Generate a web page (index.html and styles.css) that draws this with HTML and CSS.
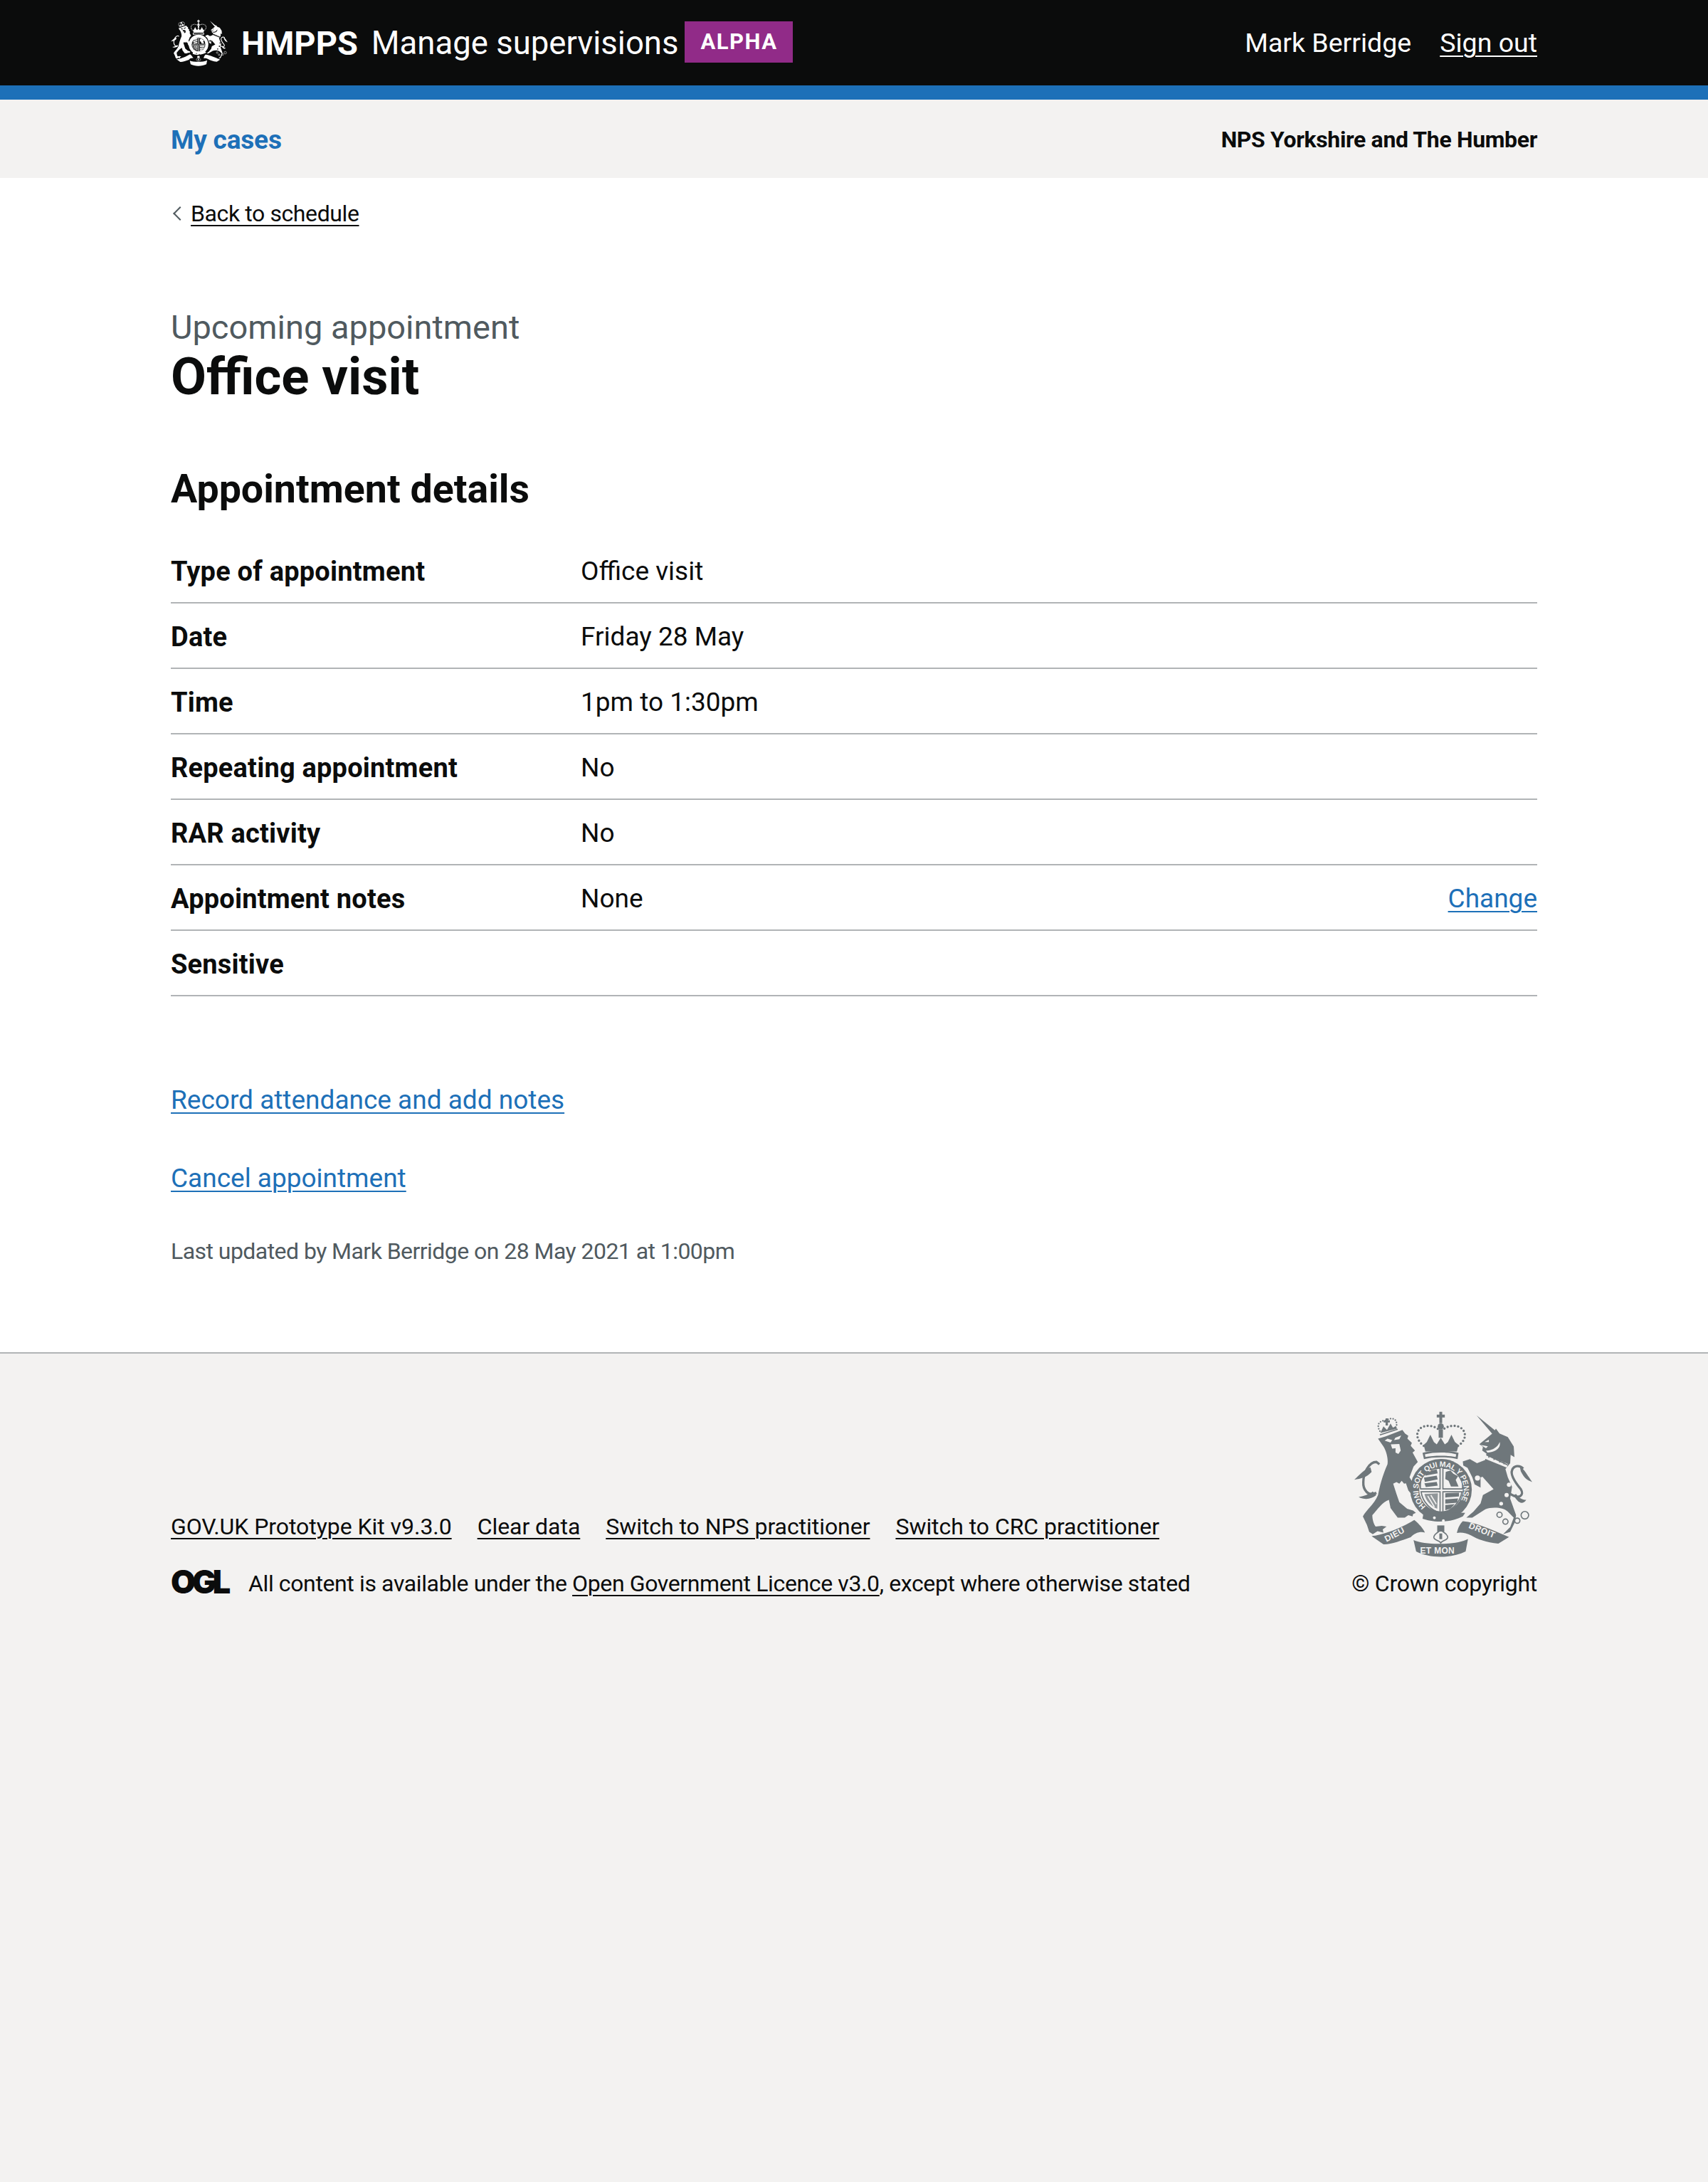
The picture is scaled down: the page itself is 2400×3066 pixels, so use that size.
FILE: index.html
```html
<!DOCTYPE html>
<html lang="en">
<head>
    <meta charset="UTF-8">
    <meta name="viewport" content="width=device-width, initial-scale=1.0">
    <title>Office visit - Manage supervisions</title>
    <link rel="stylesheet" href="styles.css">
</head>
<body>

    <!-- shared crest drawing, used by header and footer -->
    <svg class="defs" width="0" height="0" aria-hidden="true">
        <defs>
            <g id="crest-art">
                <!-- lion -->
                <path d="M172 182 205 172 275 145 286 160 300 170 296 182 315 200 310 212 328 232 318 240 340 280 322 300 305 345 330 385 345 410 335 425 318 422 300 400 290 370 282 372 272 360 262 372 250 365 236 372 250 415 262 450 295 478 320 485 332 495 320 500 318 510 300 505 285 515 255 515 225 475 218 440C190 450 170 480 148 505 148 525 155 545 162 553L188 550 208 553 192 565 195 578 170 572 150 585 135 575 125 545 108 510C125 480 155 460 172 420 180 380 190 340 212 290 215 270 210 240 195 215Z"/>
                <path class="crest-cut" d="M200 190 225 198 232 188 212 182ZM270 168 245 178 240 188 262 184ZM226 206 262 204 268 232 258 246 246 240 246 222 232 224Z"/>
                <path class="crest-line" d="M165 410C130 430 108 395 110 365 110 325 135 280 165 280L178 290"/>
                <path d="M165 420C140 440 115 440 90 428 110 425 130 420 150 405ZM140 303C115 310 95 335 72 355 100 350 125 345 145 322Z"/>
                <path class="crest-dots crest-dots-small" d="M180 150C165 125 175 105 205 105 230 90 255 95 250 130"/>
                <path d="M182 158 195 130 210 145 225 118 235 135 248 128 252 140ZM204 96h10v30h-10zM196 104h26v9h-26z"/>
                <path class="crest-thin" d="M180 166 255 142"/>

                <!-- royal crown -->
                <path d="M431 68h12v48h-12zM420 80h34v12h-34zM428 142h18v36h-18z"/>
                <circle cx="437" cy="130" r="13"/>
                <path class="crest-dots" d="M365 212C335 190 325 150 360 132 385 122 415 130 430 145M510 212C545 190 550 150 515 132 490 122 460 130 445 145"/>
                <path d="M365 208 378 196 393 165 408 196 420 206 437 178 454 206 467 196 482 165 497 196 512 208 505 236H372Z"/>
                <path d="M360 242C400 230 475 230 512 242L508 268C470 258 405 258 366 268Z"/>
                <path class="crest-cut" d="M370 248C410 238 465 238 502 248L500 259C465 252 410 252 372 259Z"/>

                <!-- garter and shield -->
                <circle cx="438" cy="397" r="130"/>
                <circle class="crest-cut" cx="438" cy="397" r="92"/>
                <path class="crest-thin" d="M434 306C400 308 370 320 356 340 350 370 350 385 352 394H434ZM446 306C480 308 510 320 524 340 530 370 530 385 528 394H446ZM434 406H354C360 450 395 485 434 494ZM446 406H526C520 450 485 485 446 494Z"/>
                <path d="M368 320 420 312 424 328 372 338ZM366 346 420 338 424 354 370 364ZM368 370 420 364 424 380 374 386Z"/>
                <path d="M458 322 478 316 490 330 510 340 500 356 512 384 480 384 470 360 456 352Z"/>
                <path class="crest-mid" d="M368 415 425 412 422 478C395 465 375 445 368 415Z"/>
                <path class="crest-harp" d="M382 424 410 470M395 420 418 458"/>
                <path d="M456 412 514 410 514 426 456 430ZM456 438 510 434 506 452 456 456ZM456 462 496 458 478 478 456 484Z"/>
                <path d="M360 520C400 535 470 540 530 510L540 495 400 490 365 490Z"/>
                <circle class="crest-cut" cx="410" cy="516" r="6"/>
                <circle class="crest-cut" cx="448" cy="528" r="6"/>

                <!-- unicorn -->
                <path d="M588 83 670 150 655 162Z"/>
                <path d="M600 205 655 160 670 140 685 160 720 175 745 215 748 260 732 250 730 285 710 310 720 345 738 385 730 435 755 505 750 535 730 575 700 585 730 555 745 515 720 490C700 470 650 470 625 480L570 515 545 515 575 490 605 455 615 420 660 395 615 345 625 268 630 245 612 232 615 216Z"/>
                <path d="M530 278 560 268 590 285 628 270 628 340 605 345 605 388 580 375 570 345 550 305 532 295Z"/>
                <path class="crest-cut" d="M605 208 636 214 628 222ZM622 196 640 186 640 196ZM628 232C650 232 675 222 686 196 692 222 665 240 634 240Z"/>
                <path class="crest-cut" d="M626 250 720 288 716 304 622 266Z"/>
                <path class="crest-thin" d="M630 250 718 292M640 248v14M662 258v14M686 268v14M704 276v14"/>
                <path class="crest-line" d="M730 415C770 440 790 420 775 395 750 365 730 335 738 315 745 295 770 292 785 308"/>
                <path d="M770 298C790 310 805 340 823 365 800 355 790 350 775 320ZM745 420C760 450 780 465 798 440 780 440 765 430 755 415Z"/>
                <circle class="crest-cut" cx="715" cy="420" r="9"/>
                <circle class="crest-cut" cx="692" cy="456" r="8"/>
                <circle class="crest-cut" cx="725" cy="376" r="9"/>
                <circle class="crest-cut" cx="602" cy="265" r="11"/>
                <circle class="crest-cut" cx="592" cy="348" r="11"/>
                <path class="crest-thin" d="M696 503a11 11 0 1 1-22 0 11 11 0 1 1 22 0ZM721 532a11 11 0 1 1-22 0 11 11 0 1 1 22 0ZM771 528a11 11 0 1 1-22 0 11 11 0 1 1 22 0ZM808 505a16 16 0 1 1-32 0 16 16 0 1 1 32 0Z"/>

                <!-- scroll -->
                <path d="M145 593C185 590 260 565 325 525 345 540 365 565 370 578 350 572 325 580 310 598 270 612 225 630 195 628Z"/>
                <path d="M322 610C370 632 500 632 552 605L542 658C480 688 390 688 333 658Z"/>
                <path d="M530 530C590 535 660 570 725 597L680 625C630 620 590 605 565 590 545 580 520 575 505 580 510 555 520 540 530 530Z"/>
                <path d="M422 548h30v26h-30z"/>
                <path class="crest-thin" d="M437 566C425 580 405 585 408 600 412 612 430 610 437 622 444 610 462 612 466 600 469 585 449 580 437 566Z"/>
                <path d="M431 582h12v24h-12z"/>
            </g>
        </defs>
    </svg>

    <!-- Header -->
    <header class="site-header">
        <div class="width-container header-inner">
            <div class="header-brand">
                <svg class="header-crest" viewBox="70 60 755 625" aria-hidden="true"><use href="#crest-art"/></svg>
                <span class="header-org">HMPPS</span>
                <span class="header-service">Manage supervisions</span>
                <strong class="phase-tag">ALPHA</strong>
            </div>
            <div class="header-user">
                <span>Mark Berridge</span>
                <a href="#">Sign out</a>
            </div>
        </div>
    </header>

    <nav class="sub-nav">
        <div class="width-container sub-nav-inner">
            <a class="sub-nav-link" href="#">My cases</a>
            <span class="sub-nav-team">NPS Yorkshire and The Humber</span>
        </div>
    </nav>

    <main class="width-container">
        <a class="back-link" href="#">Back to schedule</a>

        <span class="caption">Upcoming appointment</span>
        <h1 class="title">Office visit</h1>

        <h2 class="section-title">Appointment details</h2>

        <dl class="summary">
            <div class="summary-row">
                <dt>Type of appointment</dt>
                <dd>Office visit</dd>
            </div>
            <div class="summary-row">
                <dt>Date</dt>
                <dd>Friday 28 May</dd>
            </div>
            <div class="summary-row">
                <dt>Time</dt>
                <dd>1pm to 1:30pm</dd>
            </div>
            <div class="summary-row">
                <dt>Repeating appointment</dt>
                <dd>No</dd>
            </div>
            <div class="summary-row">
                <dt>RAR activity</dt>
                <dd>No</dd>
            </div>
            <div class="summary-row">
                <dt>Appointment notes</dt>
                <dd>None</dd>
                <a class="link" href="#">Change</a>
            </div>
            <div class="summary-row">
                <dt>Sensitive</dt>
                <dd></dd>
            </div>
        </dl>

        <ul class="actions">
            <li><a class="link" href="#">Record attendance and add notes</a></li>
            <li><a class="link" href="#">Cancel appointment</a></li>
        </ul>

        <p class="updated">Last updated by Mark Berridge on 28 May 2021 at 1:00pm</p>
    </main>

    <!-- Footer -->
    <footer class="site-footer">
        <div class="width-container footer-inner">
            <div class="footer-meta">
                <ul class="footer-links">
                    <li><a href="#">GOV.UK Prototype Kit v9.3.0</a></li>
                    <li><a href="#">Clear data</a></li>
                    <li><a href="#">Switch to NPS practitioner</a></li>
                    <li><a href="#">Switch to CRC practitioner</a></li>
                </ul>
                <div class="licence">
                    <span class="ogl">OGL</span>
                    <span class="licence-text">All content is available under the <a href="#">Open Government Licence v3.0</a>, except where otherwise stated</span>
                </div>
            </div>
            <div class="copyright">
                <svg class="footer-crest" viewBox="70 60 755 625" aria-hidden="true">
                    <use href="#crest-art"/>
                    <defs>
                        <path id="garter-curve" d="M374 468A96 96 0 1 1 502 468"/>
                    </defs>
                    <text class="crest-text"><textPath href="#garter-curve">HONI SOIT QUI MAL Y PENSE</textPath></text>
                    <text class="crest-text crest-scroll" transform="translate(208 618) rotate(-28)">DIEU</text>
                    <text class="crest-text crest-scroll" x="350" y="668">ET MON</text>
                    <text class="crest-text crest-scroll" transform="translate(553 558) rotate(22)">DROIT</text>
                </svg>
                <a href="#">© Crown copyright</a>
            </div>
        </div>
    </footer>

</body>
</html>
```

FILE: styles.css
```css
html, body {
    margin: 0;
    padding: 0;
}
body {
    min-height: 100vh;
    display: flex;
    flex-direction: column;
    font-family: Roboto, "Noto Sans", Arial, sans-serif;
    font-size: 37px;
    color: #0b0c0c;
    background-color: #fff;
}
a {
    color: inherit;
    text-underline-offset: 5px;
    text-decoration-thickness: 2px;
}
.defs {
    position: absolute;
}
.width-container {
    width: 1920px;
    margin: 0 auto;
}

/* crest */
.crest-cut {
    fill: var(--crest-bg);
}
.crest-line, .crest-thin {
    fill: none;
    stroke: currentColor;
}
.crest-line {
    stroke-width: 10;
}
.crest-thin {
    stroke-width: 5;
}
.crest-harp {
    fill: none;
    stroke: var(--crest-bg);
    stroke-width: 5;
}
.crest-dots {
    fill: none;
    stroke: currentColor;
    stroke-width: 10;
    stroke-linecap: round;
    stroke-dasharray: 0 15;
}
.crest-dots-small {
    stroke-width: 7;
    stroke-dasharray: 0 11;
}
.crest-mid {
    opacity: 0.75;
}
.crest-text {
    font-family: "Liberation Sans", Arial, sans-serif;
    font-size: 32px;
    font-weight: 700;
    letter-spacing: -1px;
    fill: var(--crest-bg);
}
.crest-scroll {
    font-size: 36px;
    letter-spacing: 1px;
}

/* header */
.site-header {
    height: 120px;
    background-color: #0b0c0c;
    border-bottom: 20px solid #1d70b8;
    color: #fff;
}
.header-inner {
    display: flex;
    justify-content: space-between;
    align-items: center;
    height: 120px;
}
.header-brand {
    display: flex;
    align-items: center;
}
.header-crest {
    width: 80px;
    height: 68px;
    margin-right: 19px;
    color: #fff;
    fill: currentColor;
    --crest-bg: #0b0c0c;
}
.header-org {
    font-size: 47px;
    font-weight: 700;
    margin-right: 19px;
}
.header-service {
    font-size: 45.5px;
    margin-right: 9px;
}
.phase-tag {
    display: block;
    width: 152px;
    height: 58px;
    line-height: 58px;
    text-align: center;
    font-size: 31px;
    font-weight: 700;
    letter-spacing: 1.5px;
    background-color: #912b88;
    margin-top: -2px;
}
.header-user {
    display: flex;
    gap: 40px;
    font-size: 37.5px;
}

/* sub navigation */
.sub-nav {
    background-color: #f3f2f1;
    height: 110px;
}
.sub-nav-inner {
    display: flex;
    justify-content: space-between;
    align-items: center;
    height: 110px;
    padding-top: 2px;
    box-sizing: border-box;
}
.sub-nav-link {
    color: #1d70b8;
    font-weight: 700;
    text-decoration: none;
    letter-spacing: -0.2px;
}
.sub-nav-team {
    font-size: 32px;
    font-weight: 700;
    letter-spacing: -0.36px;
}

/* main */
.back-link {
    display: block;
    width: fit-content;
    position: relative;
    margin-top: 30px;
    padding-left: 28px;
    font-size: 32px;
    line-height: 40px;
    letter-spacing: -0.4px;
}
.back-link::before {
    content: "";
    position: absolute;
    left: 6px;
    top: 13px;
    width: 12px;
    height: 12px;
    border-left: 2px solid #505a5f;
    border-bottom: 2px solid #505a5f;
    transform: rotate(45deg);
}
.caption {
    display: block;
    margin-top: 110px;
    font-size: 47px;
    line-height: 60px;
    color: #505a5f;
}
.title {
    margin: 0;
    font-size: 72.5px;
    line-height: 80px;
    font-weight: 700;
}
.section-title {
    margin: 88px 0 0;
    font-size: 55.5px;
    line-height: 60px;
    font-weight: 700;
}
.summary {
    margin: 38px 0 0;
}
.summary-row {
    display: flex;
    height: 92px;
    box-sizing: border-box;
    padding-top: 22px;
    line-height: 50px;
    border-bottom: 2px solid #b1b4b6;
}
.summary-row dt {
    width: 576px;
    font-size: 38px;
    font-weight: 700;
    letter-spacing: 0.2px;
}
.summary-row dd {
    margin: 0;
    flex: 1;
}
.link {
    color: #1d70b8;
}
.actions {
    list-style: none;
    margin: 121px 0 0;
    padding: 0;
}
.actions li {
    line-height: 50px;
    margin-bottom: 60px;
}
.updated {
    margin: -3px 0 0;
    font-size: 32px;
    line-height: 40px;
    letter-spacing: -0.55px;
    color: #505a5f;
}

/* footer */
.site-footer {
    flex: 1;
    margin-top: 122px;
    background-color: #f3f2f1;
    border-top: 2px solid #b1b4b6;
    font-size: 32px;
    line-height: 40px;
}
.footer-inner {
    display: flex;
    justify-content: space-between;
    align-items: flex-end;
    padding-top: 79px;
}
.footer-links {
    display: flex;
    gap: 36px;
    list-style: none;
    margin: 0 0 40px;
    padding: 0;
}
.footer-links a {
    letter-spacing: -0.05px;
}
.licence {
    display: flex;
    align-items: flex-end;
    gap: 27px;
}
.licence-text {
    letter-spacing: -0.38px;
}
.ogl {
    display: block;
    width: 82px;
    height: 36px;
    margin-bottom: 4px;
    font-family: Inter, sans-serif;
    font-size: 45px;
    line-height: 36px;
    font-weight: 900;
    letter-spacing: -5px;
}
.copyright {
    display: flex;
    flex-direction: column;
    align-items: flex-end;
}
.copyright a {
    text-decoration: none;
    letter-spacing: -0.25px;
}
.footer-crest {
    width: 252px;
    height: 208px;
    margin-right: 6px;
    margin-bottom: 16px;
    color: #6f777b;
    fill: currentColor;
    --crest-bg: #f3f2f1;
}
```
